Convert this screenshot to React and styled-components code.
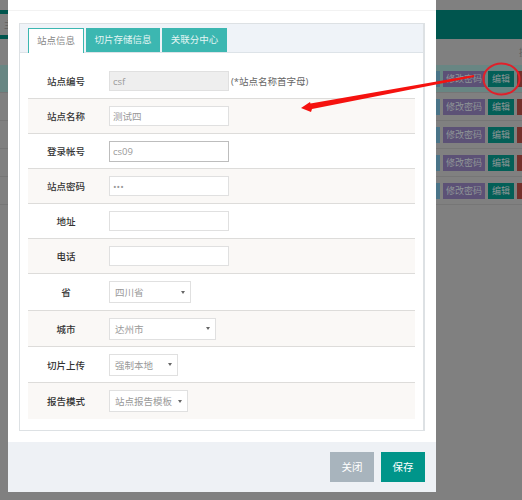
import React from "react";
import styled, { createGlobalStyle } from "styled-components";

const Global = createGlobalStyle`
  html, body {
    margin: 0;
    padding: 0;
    background: #808080;
    font-family: "Open Sans", "Noto Sans CJK SC", sans-serif;
  }
`;

const Page = styled.div`
  position: relative;
  width: 522px;
  height: 500px;
  overflow: hidden;
  background: #808080;
  padding-top: 10px;
  box-sizing: border-box;
`;

const TopBar = styled.div`
  height: 29px;
  box-sizing: border-box;
  padding: 4px 0;
  background: #00554e;
`;

const NavTab = styled.div`
  width: 8px;
  height: 21px;
  background: #808080;
  color: #5f5f5f;
  font-size: 9px;
  line-height: 21px;
  overflow: hidden;
  text-indent: 4px;
  white-space: nowrap;
`;

const TableHead = styled.div`
  height: 26px;
  box-sizing: border-box;
  padding-top: 8px;
  color: #5f5f5f;
  font-size: 9px;
  line-height: 12px;
  text-align: right;
  margin-right: -6px;
`;

const PageTable = styled.div`
  display: flex;
  flex-direction: column;
`;

const PageRow = styled.div`
  height: 28px;
  box-sizing: border-box;
  display: flex;
  align-items: center;
  justify-content: flex-end;
  gap: 3px;
  border-bottom: 1px solid #767676;
  background: ${(p) => (p.$first ? "#688683" : "transparent")};
`;

const PageBtn = styled.div`
  width: ${(p) => p.$w}px;
  height: 16px;
  background: ${(p) => p.$bg};
  color: #8f9696;
  font-size: 9px;
  line-height: 16px;
  text-align: center;
  white-space: nowrap;
  overflow: hidden;
`;

const Modal = styled.div`
  position: absolute;
  left: 8px;
  top: 0;
  width: 428px;
  height: 492px;
  background: #fff;
  display: flex;
  flex-direction: column;
`;

const ModalHead = styled.div`
  height: 10px;
  border-bottom: 1px solid #f2f2f2;
`;

const ModalBody = styled.div`
  flex: 1;
  padding: 12px 11px 11px;
`;

const Panel = styled.div`
  height: 408px;
  box-sizing: border-box;
  border: 1px solid #dde1e4;
  border-right-width: 2px;
  display: flex;
  flex-direction: column;
`;

const TabBar = styled.div`
  height: 29px;
  box-sizing: border-box;
  flex: none;
  background: #eff3f8;
  border-bottom: 1px solid #dde3e8;
  padding: 4px 0 0 8px;
  display: flex;
  gap: 2px;
`;

const Tab = styled.div`
  width: ${(p) => p.$w}px;
  height: ${(p) => (p.$active ? 25 : 24)}px;
  box-sizing: border-box;
  background: ${(p) => (p.$active ? "#fff" : "#3cb7b1")};
  color: ${(p) => (p.$active ? "#888" : "#e4f5f4")};
  border: ${(p) => (p.$active ? "1px solid #3cb7b1" : "none")};
  border-bottom: none;
  font-size: 9.5px;
  line-height: 23px;
  text-align: center;
`;

const Form = styled.div`
  padding: 0 8px;
  display: flex;
  flex-direction: column;
`;

const Row = styled.div`
  height: ${(p) => p.$h}px;
  box-sizing: border-box;
  padding-top: ${(p) => p.$pad || 0}px;
  display: flex;
  align-items: center;
  background: ${(p) => (p.$alt ? "#faf8f6" : "#fff")};
  border-bottom: ${(p) => (p.$last ? "none" : "1px solid #dddcda")};
`;

const Label = styled.div`
  width: 76px;
  flex: none;
  text-align: center;
  margin-right: 5px;
  color: #333;
  font-size: 9.5px;
  font-weight: 500;
`;

const Input = styled.div`
  width: 120px;
  height: ${(p) => (p.$focus ? 21 : 20)}px;
  box-sizing: border-box;
  border: 1px solid ${(p) => (p.$focus ? "#bdbdbd" : "#e0e0e0")};
  background: ${(p) => (p.$disabled ? "#eeeeee" : "#fff")};
  color: #999;
  font-size: 9.5px;
  line-height: 19px;
  padding-left: 3px;
  flex: none;
`;

const Hint = styled.span`
  margin-left: 2px;
  color: #666;
  font-size: 9.5px;
  white-space: nowrap;
`;

const Select = styled.div`
  width: ${(p) => p.$w}px;
  height: 22px;
  box-sizing: border-box;
  border: 1px solid #e0e0e0;
  background: #fff;
  color: #999;
  font-size: 9.5px;
  display: flex;
  align-items: center;
  justify-content: space-between;
  padding: 0 5px;
  flex: none;
`;

const Caret = styled.span`
  width: 0;
  height: 0;
  border-left: 2px solid transparent;
  border-right: 2px solid transparent;
  border-top: 3px solid #666;
`;

const Footer = styled.div`
  height: 50px;
  box-sizing: border-box;
  background: #eef1f5;
  padding: 10px 11px 0 0;
  display: flex;
  justify-content: flex-end;
  gap: 7px;
`;

const FootBtn = styled.div`
  width: 44px;
  height: 30px;
  background: ${(p) => p.$bg};
  color: #fff;
  font-size: 10.5px;
  line-height: 30px;
  text-align: center;
`;

const Annotation = styled.svg`
  position: absolute;
  left: 0;
  top: 0;
  pointer-events: none;
`;

const rows = [
  { label: "站点编号", h: 46, pad: 10, kind: "input", value: "csf", disabled: true, hint: "(*站点名称首字母)" },
  { label: "站点名称", h: 35, kind: "input", value: "测试四" },
  { label: "登录帐号", h: 35, kind: "input", value: "cs09", focus: true },
  { label: "站点密码", h: 35, kind: "input", value: "•••" },
  { label: "地址", h: 35, kind: "input", value: "" },
  { label: "电话", h: 35, kind: "input", value: "" },
  { label: "省", h: 37, kind: "select", value: "四川省", w: 82 },
  { label: "城市", h: 36, kind: "select", value: "达州市", w: 107 },
  { label: "切片上传", h: 36, kind: "select", value: "强制本地", w: 69 },
  { label: "报告模式", h: 36, kind: "select", value: "站点报告模板", w: 79 },
];

const App = () => {
  return (
    <Page>
      <Global />
      <TopBar>
        <NavTab>主</NavTab>
      </TopBar>
      <TableHead>操</TableHead>
      <PageTable>
        {[0, 1, 2, 3, 4].map((i) => (
          <PageRow key={i} $first={i === 0}>
            <PageBtn $w={20} $bg="#4a7488" />
            <PageBtn $w={42} $bg="#5c5176">修改密码</PageBtn>
            <PageBtn $w={26} $bg="#035f57">编辑</PageBtn>
            <PageBtn $w={5} $bg="#74302b" />
          </PageRow>
        ))}
      </PageTable>

      <Modal>
        <ModalHead />
        <ModalBody>
          <Panel>
            <TabBar>
              <Tab $w={56} $active>站点信息</Tab>
              <Tab $w={74}>切片存储信息</Tab>
              <Tab $w={65}>关联分中心</Tab>
            </TabBar>
            <Form>
              {rows.map((r, i) => (
                <Row key={r.label} $h={r.h} $pad={r.pad} $alt={i % 2 === 1} $last={i === rows.length - 1}>
                  <Label>{r.label}</Label>
                  {r.kind === "input" ? (
                    <Input $disabled={r.disabled} $focus={r.focus}>{r.value}</Input>
                  ) : (
                    <Select $w={r.w}>
                      {r.value}
                      <Caret />
                    </Select>
                  )}
                  {r.hint && <Hint>{r.hint}</Hint>}
                </Row>
              ))}
            </Form>
          </Panel>
        </ModalBody>
        <Footer>
          <FootBtn $bg="#a8b4bd">关闭</FootBtn>
          <FootBtn $bg="#00958a">保存</FootBtn>
        </Footer>
      </Modal>

      <Annotation width="522" height="500" viewBox="0 0 522 500">
        <ellipse cx="501.5" cy="79" rx="18" ry="15.5" fill="none" stroke="#e0202a" strokeWidth="2" />
        <path d="M301 108 L310 102 L310.5 103.5 L474 75 L474 77 L312 109 L311 112 Z" fill="#f5120f" />
      </Annotation>
    </Page>
  );
};

export default App;
